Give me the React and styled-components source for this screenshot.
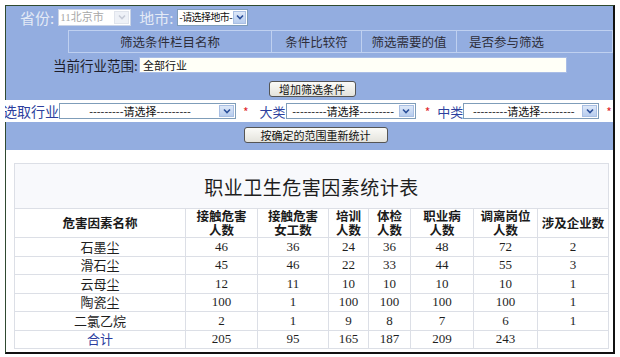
import { createGlobalStyle, styled } from "styled-components";

const GlobalStyle = createGlobalStyle`
  body {
    margin: 5px;
    background: #ffffff;
    font-family: "Noto Sans CJK SC", "Noto Sans", sans-serif;
  }
  * { box-sizing: border-box; }
`;

const BLUE = "#93ade0";

const Frame = styled.div`
  width: 610px;
  height: 349px;
  border-top: 1px solid #2f4a30;
  border-left: 1px solid #2f4a30;
  border-right: 2px solid #111;
  border-bottom: 2px solid #111;
  box-shadow: inset -1px -1px 0 #c8c8c8;
  display: flex;
  flex-direction: column;
  background: #fff;
`;

const BlueBlock = styled.div`
  background: ${BLUE};
  display: flex;
  flex-direction: column;
  flex-shrink: 0;
  height: ${(p) => p.$h}px;
  padding-bottom: 3px;
`;

const RegionRow = styled.div`
  height: 22px;
  display: flex;
  align-items: center;
  padding-left: 14px;
  gap: 4px;
`;

const FaintLabel = styled.span`
  color: #e4eaf6;
  font-size: 15px;
  white-space: nowrap;
  margin-left: ${(p) => p.$ml || 0}px;
`;

const SelectBox = styled.div`
  flex-shrink: 0;
  width: ${(p) => p.$w}px;
  height: ${(p) => p.$h || 16}px;
  background: #fff;
  border: 1px solid ${(p) => (p.$disabled ? "#c9d3e6" : "#7f9db9")};
  display: flex;
  align-items: center;
  justify-content: space-between;
  padding-left: 1px;
  font-size: ${(p) => p.$fs || 11}px;
  line-height: 1;
  color: ${(p) => (p.$disabled ? "#a8a8a8" : "#111")};
  white-space: nowrap;
`;

const SelectText = styled.span`
  flex: 1;
  text-align: ${(p) => (p.$center ? "center" : "left")};
  letter-spacing: ${(p) => p.$ls || 0}px;
  font-family: ${(p) => (p.$serif ? '"Liberation Serif", "Noto Sans CJK SC", serif' : '"Noto Sans CJK SC", sans-serif')};
`;

const Arrow = styled.span`
  flex-shrink: 0;
  width: ${(p) => p.$aw || 15}px;
  height: calc(100% - 2px);
  margin-right: 1px;
  background: ${(p) => (p.$disabled ? "#eef1f7" : "linear-gradient(#dde8f8, #b7ccee)")};
  border: 1px solid ${(p) => (p.$disabled ? "#e0e4ec" : "#a9bfe3")};
  display: flex;
  align-items: center;
  justify-content: center;
`;

const Select = ({ w, h, fs, aw, ls, disabled, center, serif, children }) => (
  <SelectBox $w={w} $h={h} $fs={fs} $disabled={disabled}>
    <SelectText $center={center} $serif={serif} $ls={ls}>{children}</SelectText>
    <Arrow $disabled={disabled} $aw={aw}>
      <svg width="8" height="6" viewBox="0 0 8 6">
        <path d="M1 1.5 L4 4.5 L7 1.5" fill="none" stroke={disabled ? "#c5cad6" : "#2b4f9a"} strokeWidth="1.6" />
      </svg>
    </Arrow>
  </SelectBox>
);

const FilterHead = styled.div`
  margin: 2px 0 0 62px;
  height: 23px;
  display: flex;
  border: 1px solid #bfd0f0;
`;

const HeadCell = styled.div`
  width: ${(p) => p.$w}px;
  border-left: ${(p) => (p.$first ? "none" : "1px solid #bfd0f0")};
  display: flex;
  align-items: center;
  justify-content: center;
  font-size: 12.5px;
  color: #2e2e3a;
`;

const ScopeRow = styled.div`
  margin-top: 3px;
  height: 18px;
  display: flex;
  align-items: center;
  padding-left: 47px;
`;

const ScopeLabel = styled.span`
  font-size: 13.5px;
  color: #1d1d2a;
  width: 86px;
  white-space: nowrap;
`;

const ScopeInput = styled.div`
  width: 428px;
  height: 16px;
  background: #fffff7;
  border: 1px solid #a9bde6;
  font-size: 11px;
  line-height: 14px;
  padding-left: 3px;
  color: #111;
`;

const ButtonRow = styled.div`
  flex: 1;
  display: flex;
  align-items: ${(p) => p.$align || "flex-end"};
  justify-content: center;
  padding-left: ${(p) => p.$pl || 0}px;
`;

const Btn = styled.button`
  width: ${(p) => p.$w}px;
  height: 16px;
  padding: 0;
  border: 1px solid #555;
  border-radius: 3px;
  background: linear-gradient(#fbfbf8, #e4e3dc);
  font-family: "Noto Sans CJK SC", sans-serif;
  font-size: 11px;
  line-height: 14px;
  color: #111;
`;

const PickRow = styled.div`
  flex-shrink: 0;
  height: 22px;
  margin-left: -4px;
  padding-left: 1px;
  background: #fff;
  display: flex;
  align-items: center;
`;

const PickLabel = styled.span`
  color: #2d3f9e;
  font-size: ${(p) => p.$fs || 14}px;
  white-space: nowrap;
  flex-shrink: 0;
  margin-left: ${(p) => p.$ml || 0}px;
`;

const Star = styled.span`
  color: #e0262a;
  font-size: 12px;
  flex-shrink: 0;
  margin-left: ${(p) => p.$ml}px;
`;

const StatsArea = styled.div`
  flex: 1;
  background: #fff;
  padding: 13px 0 0 8px;
`;

const StatsTable = styled.table`
  width: 594px;
  border-collapse: collapse;
  table-layout: fixed;
  font-family: "Liberation Serif", "Noto Sans CJK SC", serif;
  color: #1e1e1e;
  td, th {
    border: 1px solid #dcdfe6;
    padding: 0;
    text-align: center;
  }
`;

const TitleCell = styled.th`
  height: 45px;
  background: #f8f9fc;
  font-size: 19px;
  font-weight: normal;
  font-family: "Noto Sans CJK SC", serif;
  letter-spacing: 0.5px;
`;

const ColHead = styled.th`
  height: 28px;
  font-size: 12.5px;
  font-weight: bold;
  line-height: 14px;
  font-family: "Noto Sans CJK SC", sans-serif;
  color: #1a1a1a;
`;

const Row = styled.tr`
  height: 18.5px;
  font-size: 13px;
  line-height: 16px;
  td:first-child {
    font-family: "Noto Sans CJK SC", sans-serif;
    color: ${(p) => (p.$total ? "#2b3c9f" : "#1e1e1e")};
  }
`;

const widths = [171, 72, 71, 40, 42, 63, 64, 71];

const heads = [
  ["危害因素名称"],
  ["接触危害", "人数"],
  ["接触危害", "女工数"],
  ["培训", "人数"],
  ["体检", "人数"],
  ["职业病", "人数"],
  ["调离岗位", "人数"],
  ["涉及企业数"],
];

const rows = [
  ["石墨尘", 46, 36, 24, 36, 48, 72, 2],
  ["滑石尘", 45, 46, 22, 33, 44, 55, 3],
  ["云母尘", 12, 11, 10, 10, 10, 10, 1],
  ["陶瓷尘", 100, 1, 100, 100, 100, 100, 1],
  ["二氯乙烷", 2, 1, 9, 8, 7, 6, 1],
];

const totals = ["合计", 205, 95, 165, 187, 209, 243, ""];

const filterCols = [
  ["筛选条件栏目名称", 202],
  ["条件比较符", 90],
  ["筛选需要的值", 95],
  ["是否参与筛选", 100],
];

export default function App() {
  return (
    <>
      <GlobalStyle />
      <Frame>
        <BlueBlock $h={94}>
          <RegionRow>
            <FaintLabel>省份:</FaintLabel>
            <Select w={73} h={17} disabled serif>11北京市</Select>
            <FaintLabel $ml={4}>地市:</FaintLabel>
            <Select w={71} h={17} fs={10} aw={13} ls={-0.6}>-请选择地市-</Select>
          </RegionRow>
          <FilterHead>
            {filterCols.map(([t, w], i) => (
              <HeadCell key={t} $w={w} $first={i === 0}>{t}</HeadCell>
            ))}
          </FilterHead>
          <ScopeRow>
            <ScopeLabel>当前行业范围:</ScopeLabel>
            <ScopeInput>全部行业</ScopeInput>
          </ScopeRow>
          <ButtonRow $pl={5}>
            <Btn $w={87}>增加筛选条件</Btn>
          </ButtonRow>
        </BlueBlock>
        <PickRow>
          <PickLabel>选取行业</PickLabel>
          <Select w={177} center>---------请选择---------</Select>
          <Star $ml={7}>*</Star>
          <PickLabel $ml={11} $fs={13}>大类</PickLabel>
          <Select w={130} center>---------请选择---------</Select>
          <Star $ml={9}>*</Star>
          <PickLabel $ml={7} $fs={13}>中类</PickLabel>
          <Select w={136} center>---------请选择---------</Select>
          <Star $ml={7}>*</Star>
        </PickRow>
        <BlueBlock $h={28}>
          <ButtonRow $align="center" $pl={12}>
            <Btn $w={144}>按确定的范围重新统计</Btn>
          </ButtonRow>
        </BlueBlock>
        <StatsArea>
          <StatsTable>
            <colgroup>
              {widths.map((w, i) => (
                <col key={i} style={{ width: w }} />
              ))}
            </colgroup>
            <thead>
              <tr>
                <TitleCell colSpan={8}>职业卫生危害因素统计表</TitleCell>
              </tr>
              <tr>
                {heads.map((h, i) => (
                  <ColHead key={i}>
                    {h.map((l, j) => (
                      <div key={j}>{l}</div>
                    ))}
                  </ColHead>
                ))}
              </tr>
            </thead>
            <tbody>
              {rows.map((r) => (
                <Row key={r[0]}>
                  {r.map((v, i) => (
                    <td key={i}>{v}</td>
                  ))}
                </Row>
              ))}
              <Row $total>
                {totals.map((v, i) => (
                  <td key={i}>{v}</td>
                ))}
              </Row>
            </tbody>
          </StatsTable>
        </StatsArea>
      </Frame>
    </>
  );
}
